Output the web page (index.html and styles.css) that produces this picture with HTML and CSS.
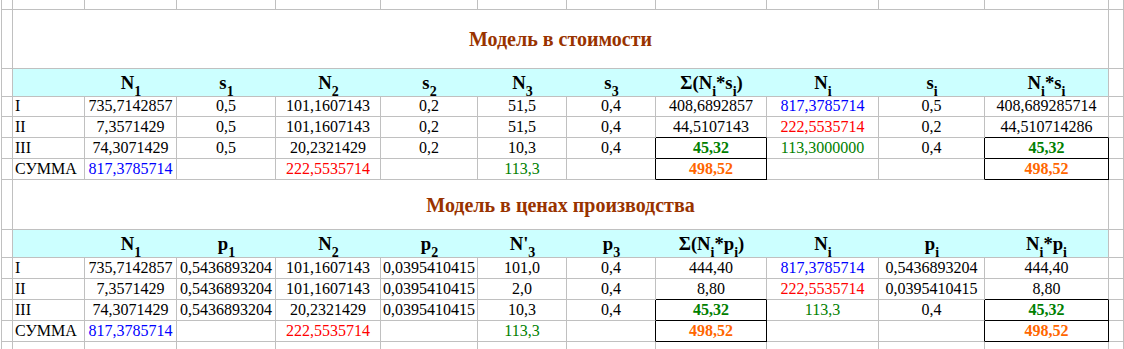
FILE: index.html
```html
<!DOCTYPE html>
<html lang="ru">
<head>
<meta charset="utf-8">
<title>Модель</title>
<link rel="stylesheet" href="styles.css">
</head>
<body>
<div class="sheet">
  <!-- row 0 -->
  <div class="c a"></div><div class="c"></div><div class="c"></div><div class="c"></div><div class="c"></div><div class="c"></div><div class="c"></div><div class="c"></div><div class="c"></div><div class="c"></div><div class="c"></div><div class="c"></div><div class="c"></div>
  <!-- title 1 -->
  <div class="c a"></div><div class="c title">Модель в стоимости</div><div class="c"></div>
  <!-- header 1 -->
  <div class="c a"></div>
  <div class="c hd"></div>
  <div class="c hd">N<sub>1</sub></div>
  <div class="c hd">s<sub>1</sub></div>
  <div class="c hd">N<sub>2</sub></div>
  <div class="c hd">s<sub>2</sub></div>
  <div class="c hd">N<sub>3</sub></div>
  <div class="c hd">s<sub>3</sub></div>
  <div class="c hd">Σ(N<sub>i</sub>*s<sub>i</sub>)</div>
  <div class="c hd">N<sub>i</sub></div>
  <div class="c hd">s<sub>i</sub></div>
  <div class="c hd last">N<sub>i</sub>*s<sub>i</sub></div>
  <div class="c"></div>
  <!-- row I -->
  <div class="c a"></div><div class="c lbl">I</div><div class="c">735,7142857</div><div class="c">0,5</div><div class="c">101,1607143</div><div class="c">0,2</div><div class="c">51,5</div><div class="c">0,4</div><div class="c">408,6892857</div><div class="c blue">817,3785714</div><div class="c">0,5</div><div class="c">408,689285714</div><div class="c"></div>
  <!-- row II -->
  <div class="c a"></div><div class="c lbl">II</div><div class="c">7,3571429</div><div class="c">0,5</div><div class="c">101,1607143</div><div class="c">0,2</div><div class="c">51,5</div><div class="c">0,4</div><div class="c kb">44,5107143</div><div class="c red">222,5535714</div><div class="c">0,2</div><div class="c kb">44,510714286</div><div class="c"></div>
  <!-- row III -->
  <div class="c a"></div><div class="c lbl">III</div><div class="c">74,3071429</div><div class="c">0,5</div><div class="c">20,2321429</div><div class="c">0,2</div><div class="c">10,3</div><div class="c kr">0,4</div><div class="c kr kb gb">45,32</div><div class="c green">113,3000000</div><div class="c kr">0,4</div><div class="c kr kb gb">45,32</div><div class="c"></div>
  <!-- sum -->
  <div class="c a"></div><div class="c lbl">СУММА</div><div class="c blue">817,3785714</div><div class="c"></div><div class="c red">222,5535714</div><div class="c"></div><div class="c green">113,3</div><div class="c kr"></div><div class="c kr kb ob">498,52</div><div class="c"></div><div class="c kr"></div><div class="c kr kb ob">498,52</div><div class="c"></div>
  <!-- title 2 -->
  <div class="c a"></div><div class="c title">Модель в ценах производства</div><div class="c"></div>
  <!-- header 2 -->
  <div class="c a"></div>
  <div class="c hd"></div>
  <div class="c hd">N<sub>1</sub></div>
  <div class="c hd">p<sub>1</sub></div>
  <div class="c hd">N<sub>2</sub></div>
  <div class="c hd">p<sub>2</sub></div>
  <div class="c hd">N'<sub>3</sub></div>
  <div class="c hd">p<sub>3</sub></div>
  <div class="c hd">Σ(N<sub>i</sub>*p<sub>i</sub>)</div>
  <div class="c hd">N<sub>i</sub></div>
  <div class="c hd">p<sub>i</sub></div>
  <div class="c hd last">N<sub>i</sub>*p<sub>i</sub></div>
  <div class="c"></div>
  <!-- row I -->
  <div class="c a"></div><div class="c lbl">I</div><div class="c">735,7142857</div><div class="c">0,5436893204</div><div class="c">101,1607143</div><div class="c">0,0395410415</div><div class="c">101,0</div><div class="c">0,4</div><div class="c">444,40</div><div class="c blue">817,3785714</div><div class="c">0,5436893204</div><div class="c">444,40</div><div class="c"></div>
  <!-- row II -->
  <div class="c a"></div><div class="c lbl">II</div><div class="c">7,3571429</div><div class="c">0,5436893204</div><div class="c">101,1607143</div><div class="c">0,0395410415</div><div class="c">2,0</div><div class="c">0,4</div><div class="c kb">8,80</div><div class="c red">222,5535714</div><div class="c">0,0395410415</div><div class="c kb">8,80</div><div class="c"></div>
  <!-- row III -->
  <div class="c a"></div><div class="c lbl">III</div><div class="c">74,3071429</div><div class="c">0,5436893204</div><div class="c">20,2321429</div><div class="c">0,0395410415</div><div class="c">10,3</div><div class="c kr">0,4</div><div class="c kr kb gb">45,32</div><div class="c green">113,3</div><div class="c kr">0,4</div><div class="c kr kb gb">45,32</div><div class="c"></div>
  <!-- sum -->
  <div class="c a"></div><div class="c lbl">СУММА</div><div class="c blue">817,3785714</div><div class="c"></div><div class="c red">222,5535714</div><div class="c"></div><div class="c green">113,3</div><div class="c kr"></div><div class="c kr kb ob">498,52</div><div class="c"></div><div class="c kr"></div><div class="c kr kb ob">498,52</div><div class="c"></div>
  <!-- trailing row -->
  <div class="c a"></div><div class="c"></div><div class="c"></div><div class="c"></div><div class="c"></div><div class="c"></div><div class="c"></div><div class="c"></div><div class="c"></div><div class="c"></div><div class="c"></div><div class="c"></div><div class="c"></div>
</div>
</body>
</html>
```
FILE: styles.css
```css
html, body {
  margin: 0;
  padding: 0;
  background: #ffffff;
  overflow: hidden;
}
body {
  padding-left: 1px;
  font-family: "Liberation Serif", "Times New Roman", serif;
  color: #000000;
}
.sheet {
  display: grid;
  grid-template-columns: 12px 72px 92px 99px 105px 97px 89px 89px 111px 112px 106px 124px 15px;
  grid-template-rows: 10px 59px 28px 20px 21px 21px 21px 50px 28px 21px 21px 21px 21px 8px;
}
.c {
  box-sizing: border-box;
  border-right: 1px solid #c0c0c0;
  border-bottom: 1px solid #c0c0c0;
  display: flex;
  align-items: flex-end;
  justify-content: center;
  padding-bottom: 1px;
  font-size: 16px;
  line-height: 18px;
  white-space: nowrap;
  min-width: 0;
}
.a {
  border-left: 1px solid #c0c0c0;
}
.lbl {
  justify-content: flex-start;
  padding-left: 2px;
}
.title {
  grid-column: span 11;
  align-items: center;
  padding-bottom: 0;
  color: #993300;
  font-weight: bold;
  font-size: 20px;
  line-height: 22px;
}
.hd {
  background: #ccffff;
  border-right: none;
  font-weight: bold;
  font-size: 18.67px;
  line-height: 18px;
  padding-bottom: 4px;
}
.hd.last {
  border-right: 1px solid #c0c0c0;
}
.hd sub {
  font-size: 14px;
  line-height: 0;
  vertical-align: -1px;
}
.blue { color: #0000ff; }
.red { color: #ff0000; }
.green { color: #008000; }
.gb { color: #008000; font-weight: bold; }
.ob { color: #ff6600; font-weight: bold; }
.kb { border-bottom-color: #000000; }
.kr { border-right-color: #000000; }
```
